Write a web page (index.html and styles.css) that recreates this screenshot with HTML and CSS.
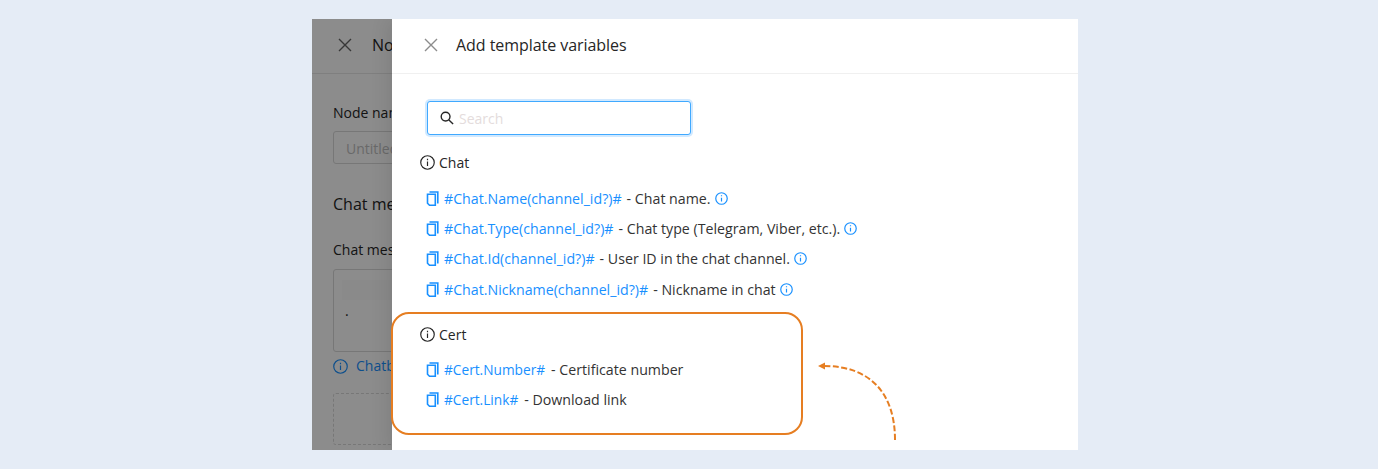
FILE: index.html
```html
<!DOCTYPE html>
<html lang="en">
<head>
    <meta charset="UTF-8">
    <title>Add template variables</title>
    <link rel="stylesheet" href="styles.css">
</head>
<body>
    <div class="frame">
        <div class="page">
            <div class="page-header">
                <svg class="close-icon" viewBox="0 0 14 14"><path d="M1 1l12 12M13 1L1 13"/></svg>
                <span class="page-title">No</span>
            </div>
            <div class="page-body">
                <div class="field-label">Node name</div>
                <div class="fake-input">Untitled</div>
                <div class="section-title">Chat message</div>
                <div class="field-label small">Chat message text</div>
                <div class="fake-textarea">
                    <div class="blur-patch"></div>
                    <div class="fake-text">.</div>
                </div>
                <div class="page-hint">
                    <svg class="info-icon" viewBox="0 0 14 14"><circle cx="7" cy="7" r="6.3"/><path d="M7 6v4.2M7 3.6v1.2"/></svg>
                    <span>Chatbot</span>
                </div>
                <div class="dropzone"></div>
            </div>
            <div class="overlay"></div>
        </div>

        <div class="drawer">
            <div class="drawer-header">
                <svg class="close-icon light" viewBox="0 0 14 14"><path d="M1 1l12 12M13 1L1 13"/></svg>
                <span class="drawer-title">Add template variables</span>
            </div>
            <div class="drawer-body">
                <div class="search">
                    <svg class="search-icon" viewBox="0 0 14 14"><circle cx="5.6" cy="5.6" r="4.4"/><path d="M8.9 8.9l4.2 4.2"/></svg>
                    <span class="search-placeholder">Search</span>
                </div>

                <div class="group">
                    <div class="group-title">
                        <svg class="info-icon" viewBox="0 0 14 14"><circle cx="7" cy="7" r="6.3"/><path d="M7 6v4.2M7 3.6v1.2"/></svg>
                        Chat
                    </div>
                    <div class="var-row">
                        <svg class="copy-icon" viewBox="0 0 12 15"><path d="M3 1h8.300v11.500M1 3.200h7.800v11H3L1 12.200z"/></svg>
                        <a class="var-link">#Chat.Name(channel_id?)#</a>
                        <span class="var-text">- Chat name.</span>
                        <svg class="hint-icon" viewBox="0 0 12 12"><circle cx="6" cy="6" r="5.300"/><path d="M6 5.200v3.600M6 3v1"/></svg>
                    </div>
                    <div class="var-row">
                        <svg class="copy-icon" viewBox="0 0 12 15"><path d="M3 1h8.300v11.500M1 3.200h7.800v11H3L1 12.200z"/></svg>
                        <a class="var-link">#Chat.Type(channel_id?)#</a>
                        <span class="var-text">- Chat type (Telegram, Viber, etc.).</span>
                        <svg class="hint-icon" viewBox="0 0 12 12"><circle cx="6" cy="6" r="5.300"/><path d="M6 5.200v3.600M6 3v1"/></svg>
                    </div>
                    <div class="var-row">
                        <svg class="copy-icon" viewBox="0 0 12 15"><path d="M3 1h8.300v11.500M1 3.200h7.800v11H3L1 12.200z"/></svg>
                        <a class="var-link">#Chat.Id(channel_id?)#</a>
                        <span class="var-text">- User ID in the chat channel.</span>
                        <svg class="hint-icon" viewBox="0 0 12 12"><circle cx="6" cy="6" r="5.300"/><path d="M6 5.200v3.600M6 3v1"/></svg>
                    </div>
                    <div class="var-row">
                        <svg class="copy-icon" viewBox="0 0 12 15"><path d="M3 1h8.300v11.500M1 3.200h7.800v11H3L1 12.200z"/></svg>
                        <a class="var-link">#Chat.Nickname(channel_id?)#</a>
                        <span class="var-text">- Nickname in chat</span>
                        <svg class="hint-icon" viewBox="0 0 12 12"><circle cx="6" cy="6" r="5.300"/><path d="M6 5.200v3.600M6 3v1"/></svg>
                    </div>
                </div>

                <div class="group group-marked">
                    <div class="group-title">
                        <svg class="info-icon" viewBox="0 0 14 14"><circle cx="7" cy="7" r="6.3"/><path d="M7 6v4.2M7 3.6v1.2"/></svg>
                        Cert
                    </div>
                    <div class="var-row">
                        <svg class="copy-icon" viewBox="0 0 12 15"><path d="M3 1h8.300v11.500M1 3.200h7.800v11H3L1 12.200z"/></svg>
                        <a class="var-link">#Cert.Number#</a>
                        <span class="var-text">- Certificate number</span>
                    </div>
                    <div class="var-row">
                        <svg class="copy-icon" viewBox="0 0 12 15"><path d="M3 1h8.300v11.500M1 3.200h7.800v11H3L1 12.200z"/></svg>
                        <a class="var-link">#Cert.Link#</a>
                        <span class="var-text">- Download link</span>
                    </div>
                </div>
            </div>

            <svg class="arrow" viewBox="0 0 90 84">
                <path class="arrow-line" d="M80 81C80 34 55 7 9 7"/>
                <path class="arrow-head" d="M3 7l7-3.500v7z"/>
            </svg>
        </div>
    </div>
</body>
</html>
```

FILE: styles.css
```css
* {
    margin: 0;
    padding: 0;
    box-sizing: border-box;
    font-family: 'Open Sans', 'Noto Sans', sans-serif;
}

body {
    background-color: #e5ecf6;
    height: 469px;
    overflow: hidden;
    padding: 19px 0 0 312px;
}

.frame {
    position: relative;
    width: 766px;
    height: 431px;
    background-color: white;
    overflow: hidden;
}

svg {
    display: block;
    flex: none;
    fill: none;
}

/* page behind the drawer */
.page {
    height: 100%;
    color: #262626;
}

.overlay {
    position: absolute;
    inset: 0;
    background-color: rgba(0, 0, 0, 0.45);
}

.page-header {
    display: flex;
    align-items: center;
    gap: 20px;
    width: 80px;
    height: 55px;
    padding: 0 0 2px 26px;
    border-bottom: 1px solid #e8e8e8;
}

.page-header .close-icon {
    stroke: #666;
}

.page-title {
    font-size: 16px;
    white-space: nowrap;
}

.page-body {
    padding: 29px 0 0 21px;
    width: 400px;
    font-size: 14px;
}

.field-label {
    line-height: 20px;
}

.field-label.small {
    margin-top: 24px;
}

.fake-input {
    width: 300px;
    height: 33px;
    margin-top: 8px;
    padding-left: 12px;
    line-height: 33px;
    color: #bfbfbf;
    border: 1px solid #d9d9d9;
    border-radius: 3px;
}

.section-title {
    margin-top: 28px;
    font-size: 16px;
    line-height: 24px;
}

.fake-textarea {
    width: 300px;
    height: 83px;
    margin-top: 9px;
    padding: 10px 0 0 8px;
    border: 1px solid #d9d9d9;
    border-radius: 3px;
}

.blur-patch {
    width: 50px;
    height: 20px;
    background-color: #fbfbfb;
}

.fake-text {
    padding: 1px 0 0 3px;
    line-height: 20px;
}

.page-hint {
    display: flex;
    align-items: center;
    gap: 8px;
    margin-top: 4px;
    line-height: 20px;
    color: #1890ff;
}

.dropzone {
    width: 300px;
    height: 52px;
    margin-top: 17px;
    border: 1px dashed #d9d9d9;
    border-radius: 3px;
}

/* drawer */
.drawer {
    position: absolute;
    top: 0;
    left: 80px;
    right: 0;
    bottom: 0;
    background-color: white;
    box-shadow: -6px 0 16px rgba(0, 0, 0, 0.08);
}

.drawer-header {
    display: flex;
    align-items: center;
    gap: 18px;
    height: 55px;
    padding: 0 0 2px 32px;
    border-bottom: 1px solid #f0f0f0;
}

.close-icon {
    width: 14px;
    height: 14px;
    stroke: #333;
    stroke-width: 1.4;
}

.close-icon.light {
    stroke: #8c8c8c;
}

.drawer-title {
    font-size: 16px;
    letter-spacing: -0.05px;
    color: #262626;
}

.drawer-body {
    padding: 27px 0 0 29px;
}

.search {
    display: flex;
    align-items: center;
    gap: 5px;
    width: 264px;
    height: 34px;
    margin-left: 6px;
    padding-left: 12px;
    background-color: white;
    border: 1px solid #40a9ff;
    border-radius: 3px;
    box-shadow: 0 0 0 2px rgba(24, 144, 255, 0.2);
}

.search-icon {
    width: 14px;
    height: 14px;
    stroke: #262626;
    stroke-width: 1.4;
}

.search-placeholder {
    font-size: 14px;
    color: #e4dcdc;
}

.group {
    margin-top: 16px;
}

.group-title {
    display: flex;
    align-items: center;
    gap: 4px;
    height: 22px;
    font-size: 14px;
    color: #262626;
    margin-bottom: 10px;
}

.group-title .info-icon {
    margin-left: -1px;
}

.info-icon {
    width: 15px;
    height: 15px;
    stroke: currentColor;
    stroke-width: 1.1;
}

.var-row {
    display: flex;
    align-items: center;
    height: 30.4px;
    padding-left: 5px;
    font-size: 14.2px;
    white-space: nowrap;
}

.copy-icon {
    width: 13px;
    height: 15px;
    margin-right: 5px;
    stroke: #1890ff;
    stroke-width: 1.6;
}

.var-link {
    color: #1890ff;
}

.var-text {
    margin-left: 5px;
    color: #333;
}

.hint-icon {
    width: 13px;
    height: 13px;
    margin-left: 4px;
    stroke: #1890ff;
    stroke-width: 1.1;
}

/* orange box around the new variables */
.group-marked {
    width: 412px;
    height: 123px;
    margin: 7px 0 0 -30px;
    padding: 10px 0 0 28px;
    border: 2px solid #e67e22;
    border-radius: 18px;
}

.group-marked .group-title {
    margin-bottom: 9px;
}

.group-marked .var-row {
    height: 30px;
}

.group-marked .var-link {
    font-size: 13.7px;
}

.group-marked .var-text {
    margin-left: 6px;
}

.arrow {
    position: absolute;
    left: 423px;
    top: 340px;
    width: 90px;
    height: 84px;
}

.arrow-line {
    stroke: #e67e22;
    stroke-width: 2;
    stroke-dasharray: 6 2.500;
}

.arrow-head {
    fill: #e67e22;
}
```
